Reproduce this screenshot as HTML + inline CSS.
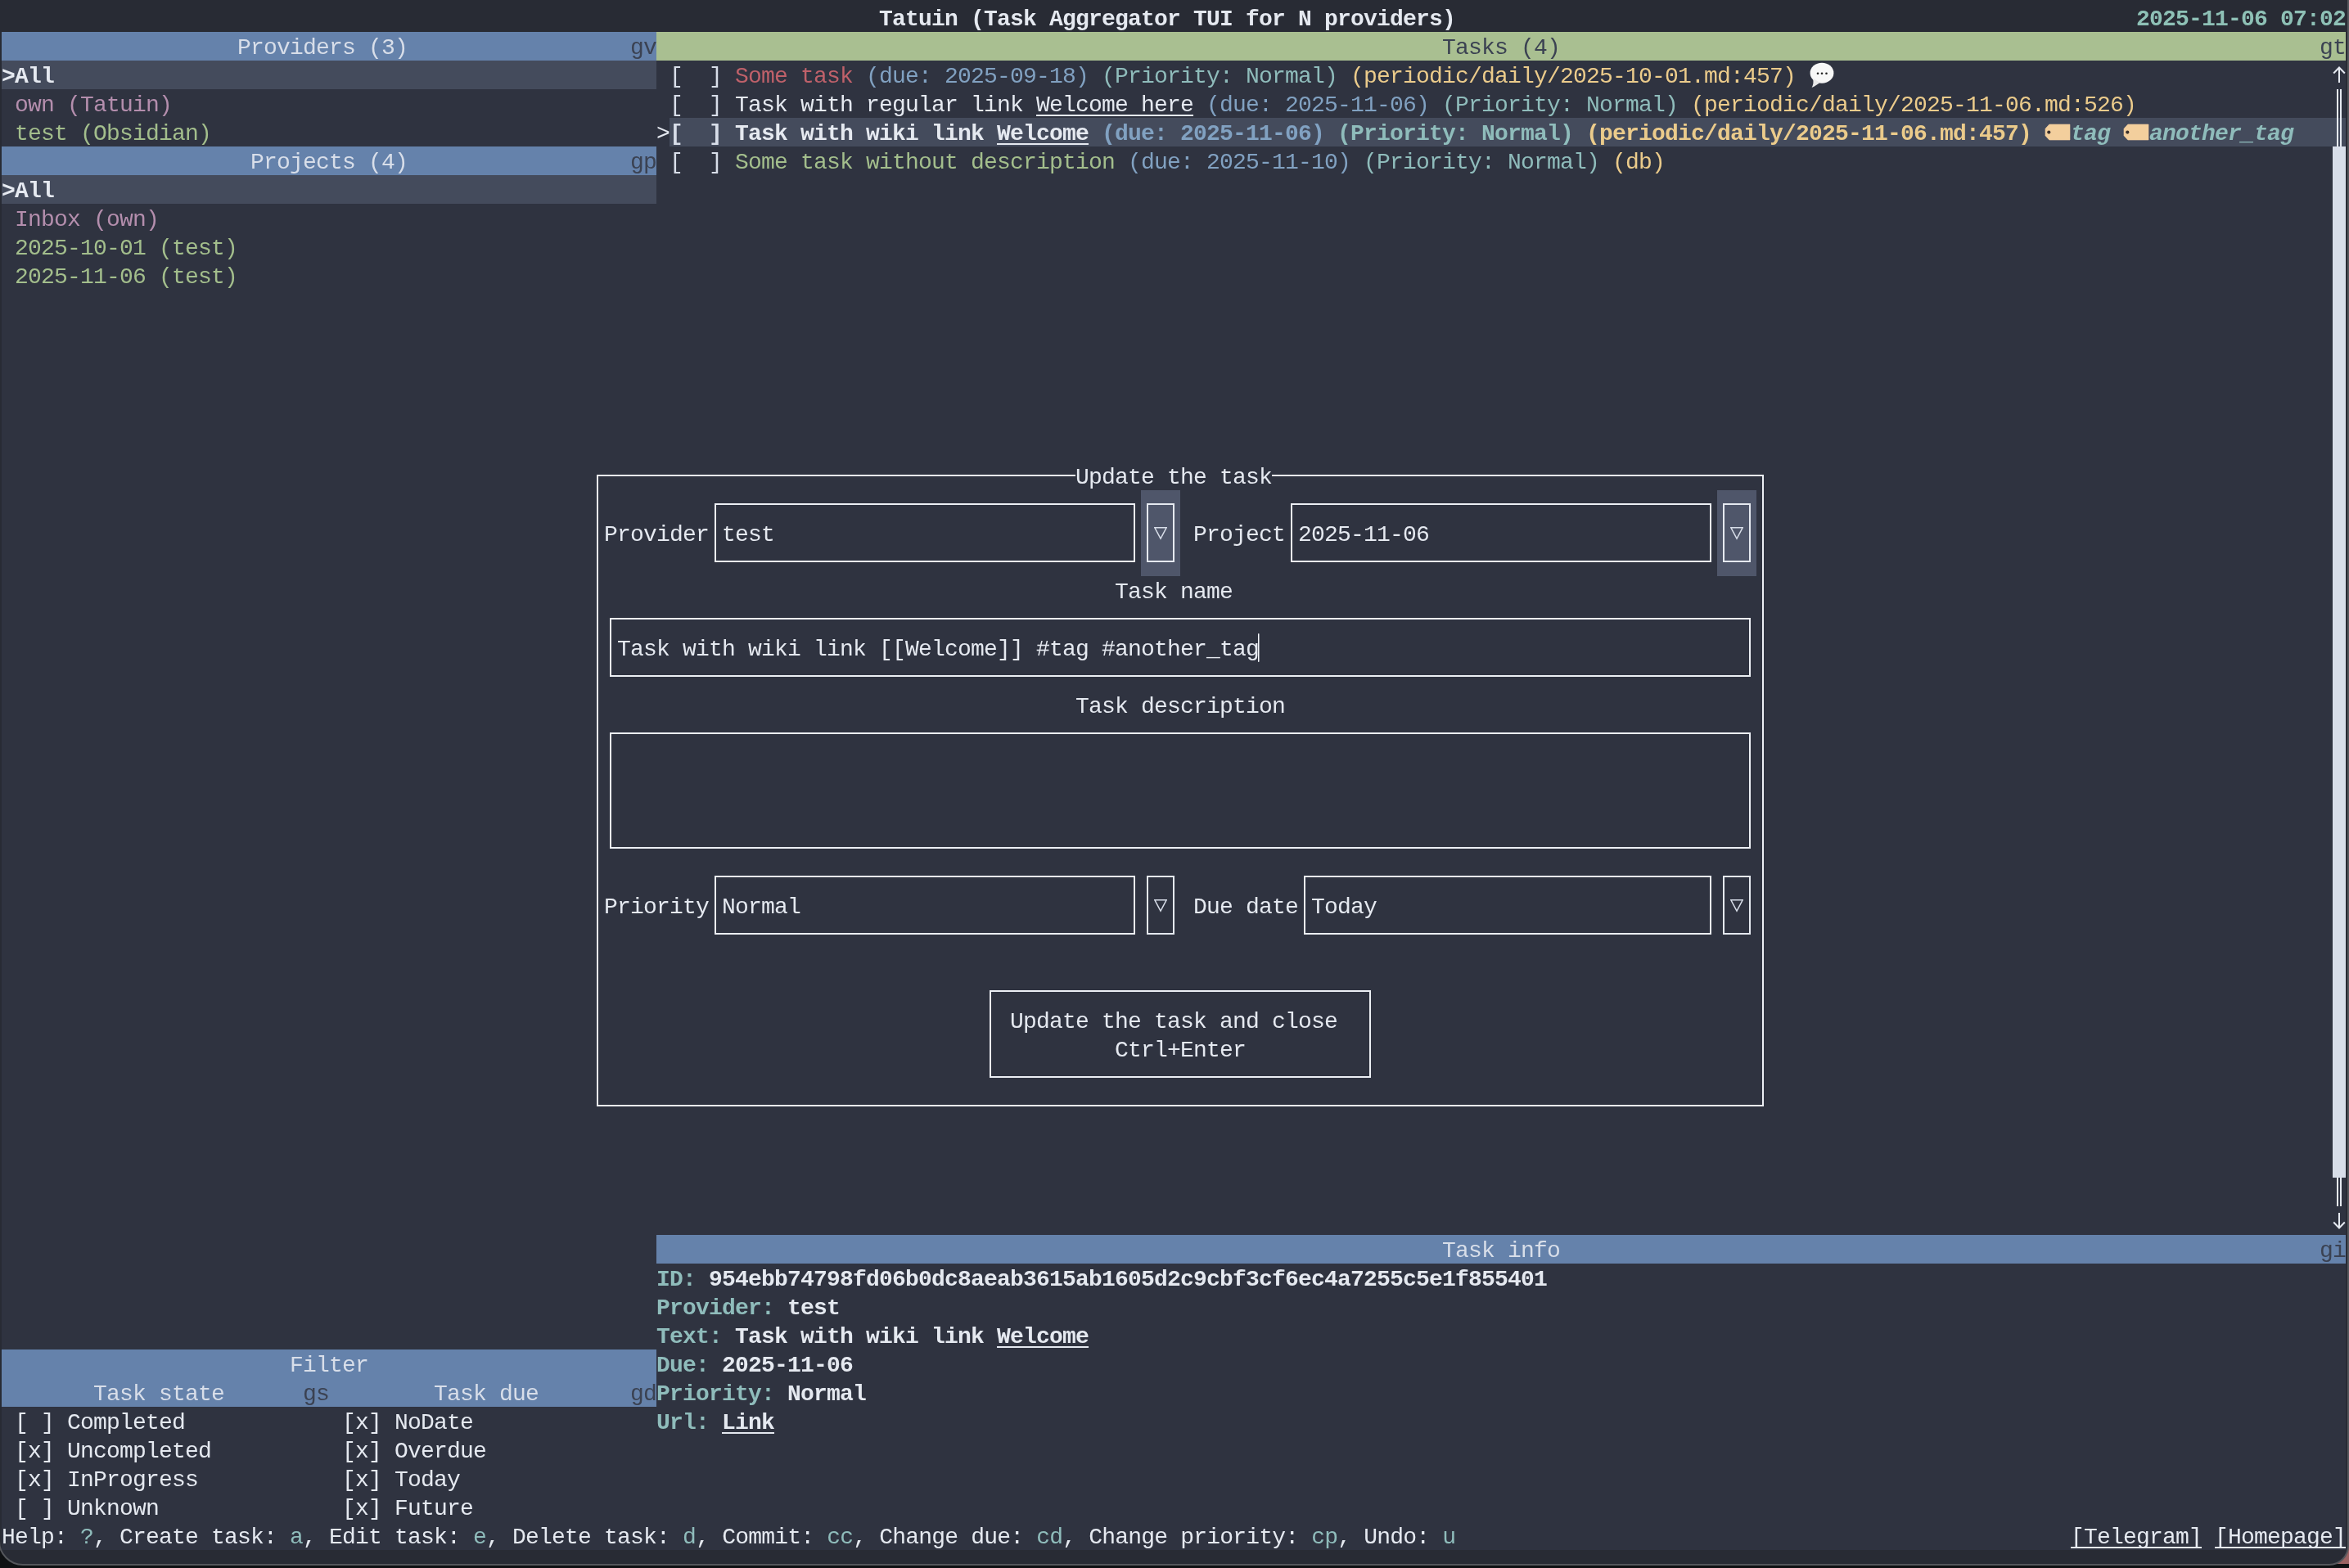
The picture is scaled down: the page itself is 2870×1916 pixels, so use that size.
<!DOCTYPE html>
<html><head><meta charset="utf-8"><style>
html,body{margin:0;padding:0;}
body{width:2870px;height:1916px;overflow:hidden;background:#0f1113;position:relative;}
#win{position:absolute;left:-2px;top:-2px;width:2868px;height:1911px;background:#282b34;border:2px solid #55575c;border-radius:0 0 24px 30px;overflow:hidden;}
#c{position:absolute;left:0;top:0;will-change:transform;width:2868px;height:1912px;}
.t{position:absolute;white-space:pre;font-family:"Liberation Mono",monospace;font-size:28.0px;letter-spacing:-0.8027px;line-height:35px;height:35px;padding-top:2.0px;box-sizing:content-box;color:#e5e9f0;}
</style></head><body><div style="position:absolute;left:2835px;top:1875px;width:35px;height:36px;background:#9b6363"></div><div id="win"><div id="c">
<div style="position:absolute;left:2px;top:39px;width:2864px;height:1855px;background:#2f3340;"></div>
<div class="t" style="left:1074px;top:4px"><span style="color:#e5e9f0;font-weight:bold">Tatuin (Task Aggregator TUI for N providers)</span></div>
<div class="t" style="left:2610px;top:4px"><span style="color:#8ec1b6;font-weight:bold">2025-11-06 07:02</span></div>
<div style="position:absolute;left:2px;top:39px;width:800px;height:35px;background:#6582ab;"></div>
<div class="t" style="left:290px;top:39px"><span style="color:#d8dee9">Providers (3)</span></div>
<div class="t" style="left:770px;top:39px"><span style="color:#3b4252">gv</span></div>
<div style="position:absolute;left:2px;top:74px;width:800px;height:35px;background:#444b5c;"></div>
<div class="t" style="left:2px;top:74px"><span style="color:#e5e9f0;font-weight:bold">&gt;All</span></div>
<div class="t" style="left:18px;top:109px"><span style="color:#b48ead">own (Tatuin)</span></div>
<div class="t" style="left:18px;top:144px"><span style="color:#a3be8c">test (Obsidian)</span></div>
<div style="position:absolute;left:2px;top:179px;width:800px;height:35px;background:#6582ab;"></div>
<div class="t" style="left:306px;top:179px"><span style="color:#d8dee9">Projects (4)</span></div>
<div class="t" style="left:770px;top:179px"><span style="color:#3b4252">gp</span></div>
<div style="position:absolute;left:2px;top:214px;width:800px;height:35px;background:#444b5c;"></div>
<div class="t" style="left:2px;top:214px"><span style="color:#e5e9f0;font-weight:bold">&gt;All</span></div>
<div class="t" style="left:18px;top:249px"><span style="color:#b48ead">Inbox (own)</span></div>
<div class="t" style="left:18px;top:284px"><span style="color:#a3be8c">2025-10-01 (test)</span></div>
<div class="t" style="left:18px;top:319px"><span style="color:#a3be8c">2025-11-06 (test)</span></div>
<div style="position:absolute;left:802px;top:39px;width:2064px;height:35px;background:#a9bf91;"></div>
<div class="t" style="left:1762px;top:39px"><span style="color:#3b4252">Tasks (4)</span></div>
<div class="t" style="left:2834px;top:39px"><span style="color:#3b4252">gt</span></div>
<div class="t" style="left:818px;top:74px"><span style="color:#d8dee9">[  ]</span></div>
<div class="t" style="left:898px;top:74px"><span style="color:#bf616a">Some task</span> <span style="color:#81a1c1">(due: 2025-09-18)</span> <span style="color:#8fbcbb">(Priority: Normal)</span> <span style="color:#ebcb8b">(periodic/daily/2025-10-01.md:457)</span></div>
<div class="t" style="left:818px;top:109px"><span style="color:#d8dee9">[  ]</span></div>
<div class="t" style="left:898px;top:109px"><span style="color:#e5e9f0">Task with regular link </span><span style="color:#e5e9f0;text-decoration:underline;text-decoration-thickness:2px;text-decoration-skip-ink:none;text-underline-offset:4.0px">Welcome here</span> <span style="color:#81a1c1">(due: 2025-11-06)</span> <span style="color:#8fbcbb">(Priority: Normal)</span> <span style="color:#ebcb8b">(periodic/daily/2025-11-06.md:526)</span></div>
<div style="position:absolute;left:818px;top:144px;width:2048px;height:35px;background:#444b5c;"></div>
<div class="t" style="left:802px;top:144px"><span style="color:#e5e9f0">&gt;</span></div>
<div class="t" style="left:818px;top:144px"><span style="color:#d8dee9;font-weight:bold">[  ]</span></div>
<div class="t" style="left:898px;top:144px"><span style="color:#e5e9f0;font-weight:bold">Task with wiki link </span><span style="color:#e5e9f0;font-weight:bold;text-decoration:underline;text-decoration-thickness:2px;text-decoration-skip-ink:none;text-underline-offset:4.0px">Welcome</span> <span style="color:#81a1c1;font-weight:bold">(due: 2025-11-06)</span> <span style="color:#8fbcbb;font-weight:bold">(Priority: Normal)</span> <span style="color:#ebcb8b;font-weight:bold">(periodic/daily/2025-11-06.md:457)</span></div>
<div class="t" style="left:2530px;top:144px"><span style="color:#8fbcbb;font-weight:bold;font-style:italic">tag</span></div>
<div class="t" style="left:2626px;top:144px"><span style="color:#8fbcbb;font-weight:bold;font-style:italic">another_tag</span></div>
<div class="t" style="left:818px;top:179px"><span style="color:#d8dee9">[  ]</span></div>
<div class="t" style="left:898px;top:179px"><span style="color:#a3be8c">Some task without description</span> <span style="color:#81a1c1">(due: 2025-11-10)</span> <span style="color:#8fbcbb">(Priority: Normal)</span> <span style="color:#ebcb8b">(db)</span></div>
<div style="position:absolute;left:802px;top:1509px;width:2064px;height:35px;background:#6582ab;"></div>
<div class="t" style="left:1762px;top:1509px"><span style="color:#d8dee9">Task info</span></div>
<div class="t" style="left:2834px;top:1509px"><span style="color:#3b4252">gi</span></div>
<div class="t" style="left:802px;top:1544px"><span style="color:#8fbcbb;font-weight:bold">ID: </span><span style="color:#e5e9f0;font-weight:bold">954ebb74798fd06b0dc8aeab3615ab1605d2c9cbf3cf6ec4a7255c5e1f855401</span></div>
<div class="t" style="left:802px;top:1579px"><span style="color:#8fbcbb;font-weight:bold">Provider: </span><span style="color:#e5e9f0;font-weight:bold">test</span></div>
<div class="t" style="left:802px;top:1614px"><span style="color:#8fbcbb;font-weight:bold">Text: </span><span style="color:#e5e9f0;font-weight:bold">Task with wiki link </span><span style="color:#e5e9f0;font-weight:bold;text-decoration:underline;text-decoration-thickness:2px;text-decoration-skip-ink:none;text-underline-offset:4.0px">Welcome</span></div>
<div class="t" style="left:802px;top:1649px"><span style="color:#8fbcbb;font-weight:bold">Due: </span><span style="color:#e5e9f0;font-weight:bold">2025-11-06</span></div>
<div class="t" style="left:802px;top:1684px"><span style="color:#8fbcbb;font-weight:bold">Priority: </span><span style="color:#e5e9f0;font-weight:bold">Normal</span></div>
<div class="t" style="left:802px;top:1719px"><span style="color:#8fbcbb;font-weight:bold">Url: </span><span style="color:#e5e9f0;font-weight:bold;text-decoration:underline;text-decoration-thickness:2px;text-decoration-skip-ink:none;text-underline-offset:4.0px">Link</span></div>
<div style="position:absolute;left:2px;top:1649px;width:800px;height:70px;background:#6582ab;"></div>
<div class="t" style="left:354px;top:1649px"><span style="color:#d8dee9">Filter</span></div>
<div class="t" style="left:114px;top:1684px"><span style="color:#d8dee9">Task state</span></div>
<div class="t" style="left:370px;top:1684px"><span style="color:#3b4252">gs</span></div>
<div class="t" style="left:530px;top:1684px"><span style="color:#d8dee9">Task due</span></div>
<div class="t" style="left:770px;top:1684px"><span style="color:#3b4252">gd</span></div>
<div class="t" style="left:18px;top:1719px"><span style="color:#e5e9f0">[ ] Completed</span></div>
<div class="t" style="left:418px;top:1719px"><span style="color:#e5e9f0">[x] NoDate</span></div>
<div class="t" style="left:18px;top:1754px"><span style="color:#e5e9f0">[x] Uncompleted</span></div>
<div class="t" style="left:418px;top:1754px"><span style="color:#e5e9f0">[x] Overdue</span></div>
<div class="t" style="left:18px;top:1789px"><span style="color:#e5e9f0">[x] InProgress</span></div>
<div class="t" style="left:418px;top:1789px"><span style="color:#e5e9f0">[x] Today</span></div>
<div class="t" style="left:18px;top:1824px"><span style="color:#e5e9f0">[ ] Unknown</span></div>
<div class="t" style="left:418px;top:1824px"><span style="color:#e5e9f0">[x] Future</span></div>
<div class="t" style="left:2px;top:1859px"><span style="color:#e5e9f0">Help: </span><span style="color:#8fbcbb">?</span><span style="color:#e5e9f0">, Create task: </span><span style="color:#8fbcbb">a</span><span style="color:#e5e9f0">, Edit task: </span><span style="color:#8fbcbb">e</span><span style="color:#e5e9f0">, Delete task: </span><span style="color:#8fbcbb">d</span><span style="color:#e5e9f0">, Commit: </span><span style="color:#8fbcbb">cc</span><span style="color:#e5e9f0">, Change due: </span><span style="color:#8fbcbb">cd</span><span style="color:#e5e9f0">, Change priority: </span><span style="color:#8fbcbb">cp</span><span style="color:#e5e9f0">, Undo: </span><span style="color:#8fbcbb">u</span></div>
<div class="t" style="left:2530px;top:1859px"><span style="color:#e5e9f0;text-decoration:underline;text-decoration-thickness:2px;text-decoration-skip-ink:none;text-underline-offset:4.0px">[Telegram]</span></div>
<div class="t" style="left:2706px;top:1859px"><span style="color:#e5e9f0;text-decoration:underline;text-decoration-thickness:2px;text-decoration-skip-ink:none;text-underline-offset:4.0px">[Homepage]</span></div>
<div style="position:absolute;left:729px;top:580px;width:1422px;height:768px;border:2px solid #eceff4;"></div>
<div style="position:absolute;left:1314px;top:564px;width:240px;height:35px;background:#2f3340;"></div>
<div class="t" style="left:1314px;top:564px"><span style="color:#e5e9f0">Update the task</span></div>
<div class="t" style="left:738px;top:634px"><span style="color:#e5e9f0">Provider</span></div>
<div style="position:absolute;left:873px;top:615px;width:510px;height:68px;border:2px solid #eceff4;"></div>
<div class="t" style="left:882px;top:634px"><span style="color:#e5e9f0">test</span></div>
<div style="position:absolute;left:1394px;top:599px;width:48px;height:105px;background:#4f566a;"></div>
<div style="position:absolute;left:1401px;top:615px;width:30px;height:68px;border:2px solid #e5e9f0;"></div>
<svg style="position:absolute;left:1410px;top:634px" width="16" height="35"><path d="M0.8 10.7 L15.2 10.7 L8 24.2 Z" fill="none" stroke="#d8dee9" stroke-width="1.4" stroke-linejoin="miter"/></svg>
<div class="t" style="left:1458px;top:634px"><span style="color:#e5e9f0">Project</span></div>
<div style="position:absolute;left:1577px;top:615px;width:510px;height:68px;border:2px solid #eceff4;"></div>
<div class="t" style="left:1586px;top:634px"><span style="color:#e5e9f0">2025-11-06</span></div>
<div style="position:absolute;left:2098px;top:599px;width:48px;height:105px;background:#4f566a;"></div>
<div style="position:absolute;left:2105px;top:615px;width:30px;height:68px;border:2px solid #e5e9f0;"></div>
<svg style="position:absolute;left:2114px;top:634px" width="16" height="35"><path d="M0.8 10.7 L15.2 10.7 L8 24.2 Z" fill="none" stroke="#d8dee9" stroke-width="1.4" stroke-linejoin="miter"/></svg>
<div class="t" style="left:1362px;top:704px"><span style="color:#e5e9f0">Task name</span></div>
<div style="position:absolute;left:745px;top:755px;width:1390px;height:68px;border:2px solid #eceff4;"></div>
<div class="t" style="left:754px;top:774px"><span style="color:#e5e9f0">Task with wiki link [[Welcome]] #tag #another_tag</span></div>
<svg style="position:absolute;left:1536px;top:774px" width="4" height="35"><rect x="1" y="0" width="1.5" height="35" rx="0.7" fill="#f4f6fa"/></svg>
<div class="t" style="left:1314px;top:844px"><span style="color:#e5e9f0">Task description</span></div>
<div style="position:absolute;left:745px;top:895px;width:1390px;height:138px;border:2px solid #eceff4;"></div>
<div class="t" style="left:738px;top:1089px"><span style="color:#e5e9f0">Priority</span></div>
<div style="position:absolute;left:873px;top:1070px;width:510px;height:68px;border:2px solid #eceff4;"></div>
<div class="t" style="left:882px;top:1089px"><span style="color:#e5e9f0">Normal</span></div>
<div style="position:absolute;left:1401px;top:1070px;width:30px;height:68px;border:2px solid #e5e9f0;"></div>
<svg style="position:absolute;left:1410px;top:1089px" width="16" height="35"><path d="M0.8 10.7 L15.2 10.7 L8 24.2 Z" fill="none" stroke="#d8dee9" stroke-width="1.4" stroke-linejoin="miter"/></svg>
<div class="t" style="left:1458px;top:1089px"><span style="color:#e5e9f0">Due date</span></div>
<div style="position:absolute;left:1593px;top:1070px;width:494px;height:68px;border:2px solid #eceff4;"></div>
<div class="t" style="left:1602px;top:1089px"><span style="color:#e5e9f0">Today</span></div>
<div style="position:absolute;left:2105px;top:1070px;width:30px;height:68px;border:2px solid #e5e9f0;"></div>
<svg style="position:absolute;left:2114px;top:1089px" width="16" height="35"><path d="M0.8 10.7 L15.2 10.7 L8 24.2 Z" fill="none" stroke="#d8dee9" stroke-width="1.4" stroke-linejoin="miter"/></svg>
<div style="position:absolute;left:1209px;top:1210px;width:462px;height:103px;border:2px solid #eceff4;"></div>
<div class="t" style="left:1234px;top:1229px"><span style="color:#e5e9f0">Update the task and close</span></div>
<div class="t" style="left:1362px;top:1264px"><span style="color:#e5e9f0">Ctrl+Enter</span></div>
<svg style="position:absolute;left:2498px;top:144px" width="32" height="35"><path d="M1 13.2 L5.8 8 L31 8 L31 27 L5.8 27 L1 21.8 Z" fill="#f3cf9d" stroke="#f3cf9d" stroke-width="0.6" stroke-linejoin="round"/><circle cx="5.3" cy="17.6" r="2.1" fill="#3a302c"/></svg>
<svg style="position:absolute;left:2594px;top:144px" width="32" height="35"><path d="M1 13.2 L5.8 8 L31 8 L31 27 L5.8 27 L1 21.8 Z" fill="#f3cf9d" stroke="#f3cf9d" stroke-width="0.6" stroke-linejoin="round"/><circle cx="5.3" cy="17.6" r="2.1" fill="#3a302c"/></svg>
<svg style="position:absolute;left:2210px;top:74px" width="32" height="35"><ellipse cx="16" cy="15.2" rx="14.4" ry="12.5" fill="#f7f7f7"/><path d="M5 22 C6 26 5.5 30 3.6 33 C7.5 31.5 11 29 13.5 26.8 Z" fill="#e8e8e8"/><circle cx="11" cy="15.7" r="1.3" fill="#222"/><circle cx="16" cy="15.7" r="1.3" fill="#222"/><circle cx="21.5" cy="15.7" r="1.3" fill="#222"/></svg>
<div style="position:absolute;left:2850px;top:179px;width:16px;height:1260px;background:#d8dee9;"></div>
<div style="position:absolute;left:2855px;top:109px;width:2px;height:35px;background:#e5e9f0"></div><div style="position:absolute;left:2859px;top:109px;width:2px;height:35px;background:#e5e9f0"></div>
<div style="position:absolute;left:2855px;top:144px;width:2px;height:35px;background:#e5e9f0"></div><div style="position:absolute;left:2859px;top:144px;width:2px;height:35px;background:#e5e9f0"></div>
<div style="position:absolute;left:2855px;top:1439px;width:2px;height:35px;background:#e5e9f0"></div><div style="position:absolute;left:2859px;top:1439px;width:2px;height:35px;background:#e5e9f0"></div>
<svg style="position:absolute;left:2850px;top:74px" width="16" height="35"><path d="M8 8.5 L8 27 M1.2 15.5 L8 8.5 L14.8 15.5" fill="none" stroke="#e5e9f0" stroke-width="2"/></svg>
<svg style="position:absolute;left:2850px;top:1474px" width="16" height="35"><path d="M8 8 L8 26.5 M1.2 19.5 L8 26.5 L14.8 19.5" fill="none" stroke="#e5e9f0" stroke-width="2"/></svg>
</div></div></body></html>
